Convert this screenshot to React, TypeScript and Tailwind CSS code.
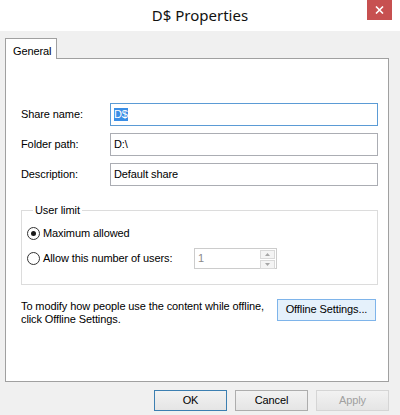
import type { ReactNode } from "react"

const ui = { fontFamily: '"Liberation Sans", Arial, sans-serif' }

function TextField({ children, focused }: { children: ReactNode; focused?: boolean }) {
    return (
        <div
            className={`flex-1 h-[23px] bg-white border flex items-center px-[3px] text-[11px] ${
                focused ? "border-[#5b9bd5]" : "border-[#abadb3]"
            }`}
        >
            {children}
        </div>
    )
}

function FieldRow({ label, children }: { label: string; children: ReactNode }) {
    return (
        <div className="flex items-center">
            <span className="w-[89px] text-[11px]">{label}</span>
            {children}
        </div>
    )
}

function Radio({ checked, label }: { checked?: boolean; label: string }) {
    return (
        <label className="flex items-center gap-[3px] text-[11px]">
            <span className="w-[13px] h-[13px] rounded-full border border-[#333333] bg-white flex items-center justify-center">
                {checked && <span className="w-[5px] h-[5px] rounded-full bg-[#1a1a1a]" />}
            </span>
            {label}
        </label>
    )
}

function SpinBox({ value }: { value: string }) {
    return (
        <div className="w-[83px] h-[21px] border border-[#cccccc] bg-white flex">
            <span className="flex-1 px-[3px] text-[11px] text-[#8a8a8a] flex items-center">{value}</span>
            <div className="w-[17px] flex flex-col gap-px p-px">
                {["M2 5 L4.5 2 L7 5 Z", "M2 2 L4.5 5 L7 2 Z"].map(d => (
                    <span key={d} className="flex-1 border border-[#d9d9d9] bg-[#f4f4f4] flex items-center justify-center">
                        <svg width="9" height="7" viewBox="0 0 9 7">
                            <path d={d} fill="#a6a6a6" />
                        </svg>
                    </span>
                ))}
            </div>
        </div>
    )
}

function DialogButton({ children, variant }: { children: ReactNode; variant?: "default" | "disabled" }) {
    const look =
        variant === "default"
            ? "border-[#3c7fb1] text-black"
            : variant === "disabled"
              ? "border-[#d5d5d5] text-[#a0a0a0]"
              : "border-[#adadad] text-black"
    return (
        <button className={`w-[73px] h-[21px] border bg-gradient-to-b from-[#f2f2f2] to-[#e5e5e5] text-[11px] ${look}`}>
            {children}
        </button>
    )
}

export default function App() {
    return (
        <div className="w-[400px] h-[415px] bg-[#f0f0f0] flex flex-col text-black tracking-[-0.1px]" style={ui}>
            {/* Title bar */}
            <div className="h-[31px] bg-white grid grid-cols-[1fr_auto_1fr]">
                <div />
                <span
                    className="text-[15px] leading-[31px] text-[#111111] tracking-normal"
                    style={{ fontFamily: '"Noto Sans", "Open Sans", sans-serif' }}
                >
                    D$ Properties
                </span>
                <div className="flex justify-end pr-[8px]">
                    <button className="w-[25px] h-[20px] bg-[#c75050] flex items-center justify-center">
                        <svg width="9" height="8" viewBox="0 0 9 8">
                            <path d="M1 0.5 L8 7.5 M8 0.5 L1 7.5" stroke="white" strokeWidth="1.6" />
                        </svg>
                    </button>
                </div>
            </div>

            <div className="pl-[5px] pt-[7px] flex flex-col">
                {/* Tab strip */}
                <div className="flex">
                    <div className="w-[52px] h-[21px] bg-white border border-b-0 border-[#a0a0a0] -mb-px relative z-10 text-[11px] pl-[7px] pt-[4px]">
                        General
                    </div>
                </div>

                {/* Page */}
                <div className="w-[384px] h-[324px] bg-white border border-[#a0a0a0] pl-[15px] pr-[10px] pt-[44px] flex flex-col">
                    <div className="flex flex-col gap-[7px]">
                        <FieldRow label="Share name:">
                            <TextField focused>
                                <span className="bg-[#3a8ee6] text-white leading-[13px]">D$</span>
                            </TextField>
                        </FieldRow>
                        <FieldRow label="Folder path:">
                            <TextField>D:\</TextField>
                        </FieldRow>
                        <FieldRow label="Description:">
                            <TextField>Default share</TextField>
                        </FieldRow>
                    </div>

                    <fieldset className="mt-[18px] border border-[#dcdcdc] pl-[5px] pr-[6px] pt-[8px] pb-[15px] flex flex-col gap-[6px]">
                        <legend className="ml-[6px] px-[2px] text-[11px] leading-[13px]">User limit</legend>
                        <Radio checked label="Maximum allowed" />
                        <div className="flex items-center">
                            <div className="w-[167px]">
                                <Radio label="Allow this number of users:" />
                            </div>
                            <SpinBox value="1" />
                        </div>
                    </fieldset>

                    <div className="mt-[14px] flex items-start justify-between">
                        <p className="text-[11px] leading-[13px] pt-px">
                            To modify how people use the content while offline,
                            <br />
                            click Offline Settings.
                        </p>
                        <button className="w-[99px] h-[22px] border border-[#7eb4ea] bg-[#e5f1fb] text-[11px] mr-[2px]">
                            Offline Settings...
                        </button>
                    </div>
                </div>

                {/* Dialog buttons */}
                <div className="w-[384px] mt-[8px] flex justify-end gap-[8px]">
                    <DialogButton variant="default">OK</DialogButton>
                    <DialogButton>Cancel</DialogButton>
                    <DialogButton variant="disabled">Apply</DialogButton>
                </div>
            </div>
        </div>
    )
}
